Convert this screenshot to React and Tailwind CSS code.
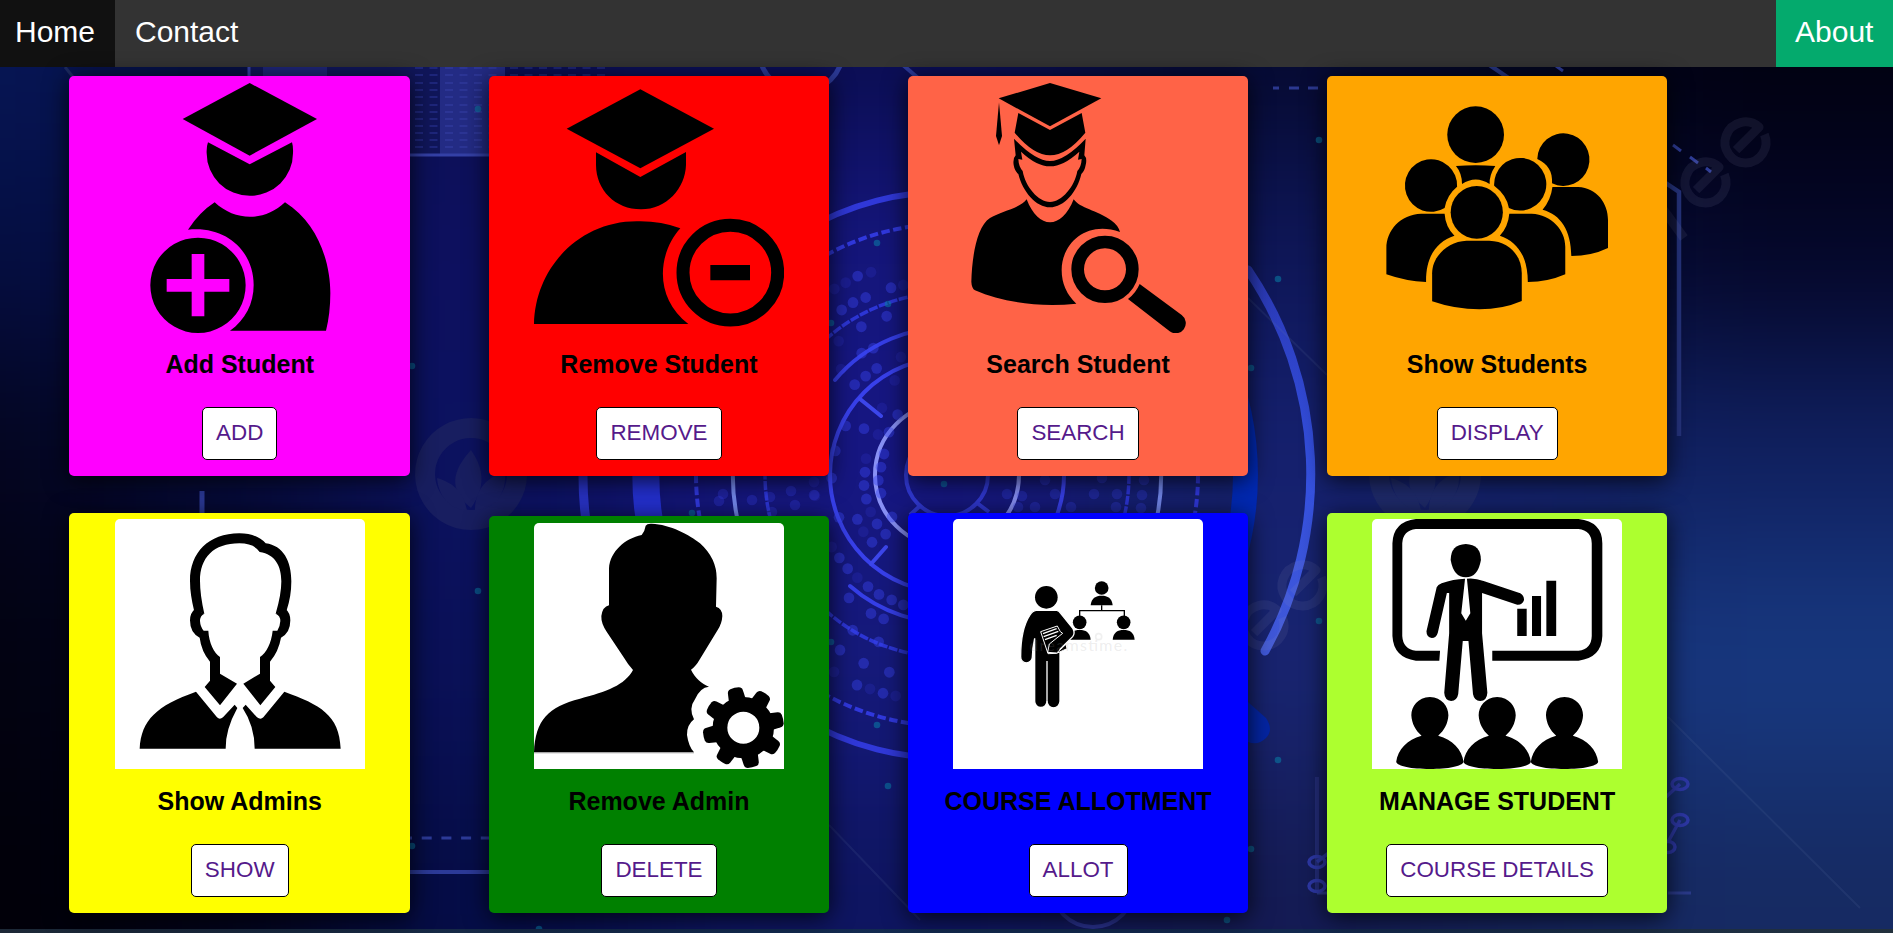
import React from "react";

/* ---------- page backdrop ---------- */

const meshX = [-200, 120, 340, 640, 1080, 1400, 1620, 2150];
const meshY = [-180, 150, 350, 550, 780, 1150];
const mesh = [
  ["#061656", "#050e42", "#04051f", "#02020f", "#010008"],
  ["#050f42", "#081048", "#060b3a", "#050830", "#02031a"],
  ["#0c1055", "#0d1060", "#0c1262", "#0a115a", "#050d48"],
  ["#0a0d50", "#15167c", "#161682", "#15197a", "#0e1560"],
  ["#050930", "#0e1658", "#15206e", "#182470", "#141a52"],
  ["#02041c", "#0a1248", "#131f68", "#162a74", "#15235c"],
  ["#010110", "#040628", "#102060", "#17387f", "#162a62"],
];

const dots = [
  [143, 247, 1], [167, 302, 1], [129, 315, 1], [95, 334, 1], [243, 277, 1], [230, 350, 1], [154, 377, 1],
  [155, 445, 1], [190, 432, 1], [200, 484, 1], [167, 504, 1], [134, 526, 1], [93, 486, 0], [107, 632, 1],
  [162, 639, 1], [216, 586, 0], [263, 603, 1], [204, 654, 0], [237, 648, 1], [222, 704, 1], [165, 751, 1],
  [168, 716, 0], [213, 738, 1], [162, 785, 1], [205, 772, 1], [169, 820, 1], [213, 805, 1], [142, 872, 1],
  [182, 853, 0], [201, 884, 1], [246, 866, 1], [160, 904, 0], [227, 910, 1], [186, 931, 1], [87, 867, 1],
  [65, 766, 1], [88, 971, 1], [113, 999, 1], [142, 1022, 0], [174, 1045, 1], [207, 1065, 1], [245, 1079, 1],
  [117, 1074, 1], [280, 1092, 1], [183, 1114, 1], [221, 1128, 1], [128, 1157, 1], [206, 1187, 1], [90, 1208, 1],
  [161, 1242, 1], [238, 1265, 1], [141, 1298, 1], [180, 1308, 0], [219, 1319, 1], [257, 1326, 0], [73, 280, 0],
  [107, 264, 0], [183, 237, 0], [280, 270, 0], [76, 696, 1], [86, 414, 0], [273, 455, 0], [254, 515, 0],
  [72, 1264, 0], [65, 943, 0], [15, 811, 0], [12, 776, 0],
];

const gapDots = [
  [723, 494], [719, 501], [752, 500], [791, 491], [795, 505], [814, 495], [770, 497], [772, 512],
  [1007, 494], [1022, 496], [1055, 494], [1094, 494], [1117, 494], [1142, 495], [1018, 507], [1035, 507],
  [1071, 507], [1116, 507], [1141, 508], [1102, 478], [1144, 480], [1045, 480],
];

const sparks = [
  [877, 243], [888, 304], [831, 323], [831, 642], [877, 725], [888, 786], [1319, 140], [1278, 279], [1251, 368],
  [1319, 621], [1278, 760], [1251, 849], [478, 109], [478, 591], [412, 846], [412, 366], [692, 513], [944, 484],
  [1227, 920], [539, 929],
];

function WatermarkE({ x, y }) {
  return (
    <g transform={`translate(${x} ${y}) rotate(-45)`} fill="none" stroke="#9aa0c0" strokeOpacity="0.1" strokeWidth="9">
      <path d="M19 7 A20.5 20.5 0 1 1 20.5 -2 L-12 -2" strokeLinejoin="round" />
    </g>
  );
}

function WatermarkLeaf({ x, fill }) {
  return (
    <g transform={`translate(${x} 474)`} fill="none" stroke={fill}>
      <path d="M0 -46 A46 46 0 1 0 0.1 -46 Z" strokeWidth="20" />
      <path d="M0 -24 C-24 2 -18 20 0 34 C14 14 14 -4 0 -24 Z" fill={fill} stroke="none" />
      <path d="M-34 4 C-32 26 -18 36 -4 36 C-8 16 -20 8 -34 4 Z M34 -2 C36 24 20 36 4 36 C4 14 18 2 34 -2 Z" fill={fill} stroke="none" />
    </g>
  );
}

function Backdrop() {
  return (
    <svg className="absolute inset-0 h-full w-full" viewBox="0 0 1893 933" preserveAspectRatio="none" aria-hidden="true">
      <defs>
        <filter id="soft" filterUnits="userSpaceOnUse" x="-200" y="-200" width="2350" height="1350" colorInterpolationFilters="sRGB">
          <feGaussianBlur stdDeviation="75" />
        </filter>
        <linearGradient id="seam" x1="0" x2="1" y1="0" y2="0">
          <stop offset="0" stopColor="#1c2836" />
          <stop offset="0.4" stopColor="#122a50" />
          <stop offset="0.7" stopColor="#12284e" />
          <stop offset="1" stopColor="#22303c" />
        </linearGradient>
        <linearGradient id="arc" x1="0" x2="0" y1="0" y2="1">
          <stop offset="0" stopColor="#2a38b4" />
          <stop offset="0.5" stopColor="#3450e0" />
          <stop offset="1" stopColor="#4058d8" />
        </linearGradient>
      </defs>
      <g filter="url(#soft)">
        {mesh.map((col, i) =>
          col.map((c, j) => (
            <rect key={`${i}-${j}`} x={meshX[i]} y={meshY[j]} width={meshX[i + 1] - meshX[i] + 1} height={meshY[j + 1] - meshY[j] + 1} fill={c} />
          ))
        )}
      </g>

      {/* data panel, top left */}
      <rect x="250" y="60" width="190" height="94" fill="#10165a" />
      <rect x="263" y="60" width="64" height="94" fill="#1e2678" />
      <rect x="440" y="60" width="65" height="94" fill="#232b84" />
      <g strokeWidth="1.5" strokeDasharray="8 6.5">
        {[68, 75, 83, 90, 97, 105, 112, 119, 126, 133, 140, 147].map((y) => (
          <g key={y}>
            <path d={`M415 ${y}H440`} stroke="#232c86" />
            <path d={`M445 ${y}H500`} stroke="#303a9a" />
          </g>
        ))}
      </g>
      <path d="M510 68H610M510 75H610" stroke="#232c80" strokeWidth="1.5" strokeDasharray="8 6.5" />
      <path d="M249 60V155H505" fill="none" stroke="#3440a6" strokeWidth="3" />
      <path d="M65 67L73 77" stroke="#1c2a60" strokeWidth="3" />

      {/* target rings */}
      <g fill="none">
        <path d="M1248 270A364 364 0 0 1 1265 651" stroke="url(#arc)" strokeWidth="9" strokeLinecap="round" />
        <path d="M600 365A364 364 0 0 0 600 585" stroke="#2832c4" strokeWidth="9" />
        <path d="M670 357A300 300 0 0 0 670 593" stroke="#2430d0" strokeWidth="27" />
        <path d="M800 717A283 283 0 0 0 960 758M800 233A283 283 0 0 1 960 192" stroke="#3038d8" strokeWidth="6" />
        <circle cx="947" cy="475" r="251" stroke="#3038dc" strokeWidth="4" strokeDasharray="8.5 3.5" />
        <path d="M746 401A214 214 0 0 0 746 549M1148 401A214 214 0 0 1 1148 549" stroke="#7488ec" strokeWidth="4" />
        <circle cx="947" cy="475" r="182" stroke="#2c35d4" strokeWidth="3.5" strokeDasharray="9 1.5" />
        <path d="M835 380A147 147 0 0 1 960 328M850 586A147 147 0 0 0 960 622" stroke="#353ee6" strokeWidth="4" strokeLinecap="round" />
        <circle cx="947" cy="475" r="117" stroke="#3840ea" strokeWidth="4" />
        <path d="M860 399L881 416M871 564L886 547" stroke="#3c46ea" strokeWidth="4" strokeLinecap="round" />
        <circle cx="947" cy="475" r="72" stroke="#8890f4" strokeWidth="4" />
        <circle cx="947" cy="475" r="41" stroke="#3038d0" strokeWidth="4" />
        <path d="M921 505L910 515M977 503L989 512" stroke="#3038d0" strokeWidth="4" />
      </g>
      <path d="M1233 475A286 286 0 0 0 1205 352L1232 350A314 314 0 0 1 1232 600L1205 598A286 286 0 0 0 1233 475Z" fill="#0029b4" />
      <path d="M1235 690L1248 702L1266 718Q1274 730 1266 738Q1258 746 1248 742L1235 742Z" fill="#0425a4" />
      <g transform="translate(810 180) scale(0.33333 0.38911)">
        {dots.map(([x, y, on]) => (
          <ellipse key={`${x}-${y}`} cx={x} cy={y} rx="16" ry="14" fill="#3a44f0" fillOpacity={on ? 0.42 : 0.17} />
        ))}
      </g>
      {gapDots.map(([x, y]) => (
        <circle key={`${x}-${y}`} cx={x} cy={y} r="5.3" fill="#3a44f0" fillOpacity="0.28" />
      ))}
      {sparks.map(([x, y]) => (
        <circle key={`${x}-${y}`} cx={x} cy={y} r="3.3" fill="#0a7fa8" fillOpacity="0.55" />
      ))}

      {/* connecting lines */}
      <g fill="none" stroke="#2c3a98">
        <circle cx="801" cy="50" r="42" strokeWidth="5" />
        <circle cx="1093" cy="885" r="42" strokeWidth="4" stroke="#28308a" />
        <path d="M903 65L918 78" strokeWidth="4" />
        <path d="M1488 64L1510 79L1679 192V436" strokeWidth="4.5" stroke="#263580" />
        <path d="M1556 66L1563 71M1673 145L1681 151M1690 157L1698 163M1706 168L1711 172" strokeWidth="3" stroke="#2e3c96" />
        <path d="M1273 88H1279M1289 88H1299M1308 88H1318" strokeWidth="3" stroke="#2c3890" />
        <path d="M202 491V515" strokeWidth="5" />
        <path d="M402 838H489" strokeWidth="3" strokeDasharray="10 9.7" />
        <path d="M402 872H489" strokeWidth="4" />
        <path d="M1317 777V893" strokeWidth="4" stroke="#232c78" />
        <path d="M1668 893H1691M1317 893H1330" strokeWidth="3" stroke="#2a3a8a" />
        <path d="M1666 797L1680 784M1668 842L1680 820M1317 862L1330 852" strokeWidth="3.5" stroke="#2c38a0" />
        <g strokeWidth="3.5" stroke="#2d38a6">
          <ellipse cx="1317" cy="862" rx="8" ry="5.5" />
          <ellipse cx="1317" cy="886" rx="8" ry="5.5" />
          <ellipse cx="1680" cy="784" rx="8" ry="5.5" />
          <ellipse cx="1680" cy="820" rx="8" ry="5.5" />
          <ellipse cx="1668" cy="847" rx="7" ry="5.5" />
        </g>
        <path d="M1668 717L1860 908M829 825L920 920M1248 298L1327 375" strokeWidth="2" stroke="#6070a0" strokeOpacity="0.15" />
        <path d="M1660 205L1684 238" stroke="#9aa0c0" strokeOpacity="0.1" strokeWidth="9" />
      </g>

      <WatermarkLeaf x={471} fill="#181e60" />
      <WatermarkLeaf x={1425} fill="#1f2b6c" />
      <WatermarkE x={1746} y={143} />
      <WatermarkE x={1706} y={183} />
      <WatermarkE x={1303} y={586} />
      <WatermarkE x={1264} y={626} />

      <rect x="0" y="929" width="1893" height="4" fill="url(#seam)" />
    </svg>
  );
}

/* ---------- card pictures ---------- */

const pic = "block h-[250px] w-[250px] shrink-0";

function AddStudentPic() {
  return (
    <svg className={pic} viewBox="344 249 750 750">
      <path d="M748 249L950 357L748 467L547 357Z" />
      <path d="M623 427L748 493L875 427Q879 440 878 460A129 127 0 0 1 619 460Q618 440 623 427Z" />
      <path d="M643 607C705 665 793 665 854 607C955 670 990 790 990 880Q990 940 977 992H689C735 960 760 910 760 855C760 755 680 677 563 689Q598 636 643 607Z" />
      <path fillRule="evenodd" d="M593 713A143 143 0 1 1 592.900 713ZM574 762V837H499V875H574V949H612V875H687V837H612V762Z" />
    </svg>
  );
}

function RemoveStudentPic() {
  return (
    <svg className={pic} viewBox="192 69 750 750">
      <path d="M511 88L732 206L511 325L290 206Z" />
      <path d="M378 277L511 351L648 276V315C646 385 590 448 513 448C436 448 378 390 378 315Z" />
      <path d="M192 792C196 620 330 484 500 484Q570 482 631 505C560 585 555 715 655 792Z" />
      <circle cx="781" cy="638" r="142" fill="none" stroke="#000" strokeWidth="39" />
      <path d="M721 615H840V661H721Z" />
    </svg>
  );
}

function SearchStudentPic() {
  return (
    <svg className={pic} viewBox="219 69 750 750">
      <path d="M510 69L664 115L510 199L356 115Z" />
      <path d="M357 127L366 228L357 256L348 228Z" />
      <path d="M415 159L510 210L605 159L616 218Q560 286 510 286Q460 286 404 218Z" />
      <path
        fillRule="evenodd"
        d="M402 236Q465 302 510 303Q555 302 617 236L613 286Q622 295 617 315Q614 333 604 342C592 395 552 442 510 442C468 442 428 395 415 342Q404 333 401 315Q398 295 407 286ZM423 275L427 299L415 297Q416 320 428 333C436 380 475 426 510 426C545 426 584 380 592 333Q604 320 605 297L594 299L598 275Q550 319 510 319Q470 319 423 275Z"
      />
      <path d="M440 418C475 510 545 510 581 418C600 445 650 450 695 482Q715 496 720 516C620 480 545 550 545 630Q545 690 589 731C480 742 370 728 285 691Q275 685 274 665C276 590 290 500 330 474C360 455 420 445 440 418Z" />
      <circle cx="675" cy="628" r="82" fill="none" stroke="#000" strokeWidth="38" />
      <path d="M779 672L905 765A30 30 0 0 1 869 814L744 717Q767 700 779 672Z" />
    </svg>
  );
}

function ShowStudentsPic() {
  return (
    <svg className={pic} viewBox="190 69 661 750" preserveAspectRatio="none">
      <ellipse cx="464" cy="224" rx="75" ry="85" />
      <path d="M412 318Q464 313 516 318Q500 345 501 372Q464 345 428 372Q428 340 412 318Z" />
      <path d="M627 297A69 79 0 1 1 666 370C668 335 655 312 627 297Z" />
      <path d="M667 381H735C785 384 814 430 814 480V564Q770 588 717 588C716 510 690 465 641 449Q663 420 667 381Z" />
      <path d="M415 380A69 79 0 1 0 382 444Q388 405 415 380Z" />
      <path d="M513 377A69 79 0 1 1 552 444Q546 405 513 377Z" />
      <path d="M382 461H320C265 464 228 510 228 565V643Q280 664 333 666C332 590 360 545 408 527Q384 500 382 461Z" />
      <path d="M553 461H612C665 464 701 510 701 560V643Q655 666 602 666C602 590 575 545 528 527Q550 500 553 461Z" />
      <ellipse cx="467" cy="457" rx="69" ry="79" />
      <path d="M440 542H500C555 544 586 590 586 640V723Q535 748 474 748Q410 748 349 724V640C349 590 390 544 440 542Z" />
    </svg>
  );
}

function ShowAdminsPic() {
  return (
    <svg className={`${pic} rounded-t-[5px] bg-white`} viewBox="345 118 750 750">
      <path
        fillRule="evenodd"
        d="M582 392C575 360 570 335 570 303C570 220 625 161 718 161Q770 161 797 191C850 198 874 245 874 305Q874 350 860 392L827 402Q844 345 844 305C844 260 826 224 779 217Q762 191 718 191C640 191 600 235 600 303Q600 345 613 402Z"
      />
      <path d="M585 388L613 402Q600 408 600 424Q601 442 611 453H625C627 490 642 520 660 532V582L711 612L660 677L614 622L630 603V546Q604 515 599 474Q570 460 570 422Q570 400 585 388Z" />
      <path d="M857 388L827 402Q841 408 841 424Q840 442 832 453H818C814 490 799 520 780 532V582L730 612L781 677L826 622L810 603V546Q836 515 843 474Q871 460 871 422Q871 400 857 388Z" />
      <path d="M588 636L651 713Q659 721 669 713L704 675L712 685Q676 750 677 807H419C424 720 470 678 588 636Z" />
      <path d="M853 636L790 713Q782 721 771 713L737 675L728 685Q764 740 764 807H1022C1018 705 960 675 853 636Z" />
    </svg>
  );
}

function RemoveAdminPic() {
  return (
    <svg className="block h-[246px] w-[250px] shrink-0 rounded-t-[5px] bg-white" viewBox="192 99 750 738" preserveAspectRatio="none">
      <path d="M192 787C196 690 235 650 330 626C410 605 465 585 489 540Q475 525 460 500L410 425Q393 400 394 378Q398 350 417 346V235C420 185 465 145 515 135Q524 125 527 107Q531 100 545 101C600 103 660 135 690 160Q740 205 740 265L738 350Q757 356 757 378Q756 400 743 420L690 507Q677 530 663 539C675 565 695 580 717 590Q690 592 675 628Q655 655 672 688Q650 705 651 735Q656 770 672 787Z" />
      <path d="M192 788.500H672" stroke="#888" strokeWidth="2" />
      <circle cx="820" cy="713" r="70" fill="none" stroke="#000" strokeWidth="44" />
      {[-12.5, 32.5, 77.5, 122.5, 167.5, 212.5, 257.5, 302.5].map((a) => (
        <path key={a} d="M900 687L930 690Q939 691 941 700Q943 713 941 726Q939 735 930 736L900 739Z" transform={`rotate(${a} 820 713)`} />
      ))}
    </svg>
  );
}

function Bust({ x, y }) {
  return (
    <g transform={`translate(${x} ${y})`}>
      <circle r="20.500" />
      <path d="M-33 52C-31 30 -18 23 0 23C18 23 31 30 33 52Z" />
    </g>
  );
}

function CourseAllotmentPic() {
  return (
    <svg className={`${pic} rounded-t-[5px] bg-white`} viewBox="219 87 750 750">
      <Bust x="665" y="294" />
      <Bust x="599" y="397" />
      <Bust x="731" y="397" />
      <path d="M665 346V362M599 380V362H733V380" fill="none" stroke="#000" strokeWidth="4" />
      <circle cx="499" cy="322" r="34" />
      <path
        stroke="#fff"
        strokeWidth="4"
        d="M468 361H530Q537 362 542 370L579 416Q586 430 578 440L540 478V634A18 18 0 0 1 501 634A18 18 0 0 1 464 634V445Q457 475 457 502A17 17 0 0 1 422 500C422 450 430 405 450 375Q458 362 468 361Z"
      />
      <path d="M501 513V636" stroke="#fff" strokeWidth="4" />
      <path d="M482 425L532 408L541 425L548 430L508 462L503 487L530 489L558 463L561 476L530 490L504 491Z" stroke="#fff" strokeWidth="3" />
      <path d="M489 431L530 416M491 440L535 424M495 449L530 436" stroke="#fff" strokeWidth="4" />
      <text x="448" y="482" fontSize="48" fontFamily="Lato, sans-serif" textLength="294" fill="#999" fillOpacity="0.18">
        dreamstime.
      </text>
      <circle cx="656" cy="440" r="9" fill="none" stroke="#999" strokeOpacity="0.15" strokeWidth="5" />
    </svg>
  );
}

function ManageStudentPic() {
  return (
    <svg className={`${pic} rounded-t-[5px] bg-white`} viewBox="190 87 661 750" preserveAspectRatio="none">
      <path
        fillRule="evenodd"
        d="M306 87H736Q799 95 799 160V438Q797 503 736 512H508V482H736Q770 478 771 438V160Q770 121 736 117H306Q272 121 270 160V438Q272 478 306 482H370L368 512H306Q247 503 244 438V160Q246 95 306 87Z"
      />
      <path d="M438 162Q478 164 478 210Q470 262 438 262Q406 262 398 210Q398 164 438 162Z" />
      <path d="M436 266L426 370L438 392L450 370L441 266Q462 263 485 273L582 310Q592 316 592 330Q588 345 574 344L481 309V430L495 608Q494 632 476 633Q460 632 457 612L445 453H430L418 612Q415 632 399 633Q382 630 381 608L394 430V309H388L364 428Q360 444 348 444Q334 442 334 424L361 292Q364 284 374 280Q405 267 436 266Z" />
      <path d="M574 356H599V438H574ZM613 318H637V438H613ZM651 272H677V438H651Z" />
      {[343, 521, 699].map((x) => (
        <path
          key={x}
          transform={`translate(${x} 0)`}
          d="M0 621C32 622 49 650 49 676C48 700 38 722 22 737C60 748 85 780 89 815C88 828 50 837 0 837C-50 837 -88 828 -89 815C-85 780 -60 748 -22 737C-38 722 -48 700 -49 676C-49 650 -32 622 0 621Z"
        />
      ))}
    </svg>
  );
}

/* ---------- page ---------- */

const upper = { card: "h-[400px] pt-[7px]", heading: "mt-[17px]" };
const lower = { card: "h-[400px] pt-1.5", heading: "mt-[18px]" };
const short = { card: "h-[397px] pt-[7px]", heading: "mt-[18px]" };

const cards = [
  { title: "Add Student", action: "ADD", bg: "bg-[#ff00ff]", fit: upper, Pic: AddStudentPic },
  { title: "Remove Student", action: "REMOVE", bg: "bg-[#ff0000]", fit: upper, Pic: RemoveStudentPic },
  { title: "Search Student", action: "SEARCH", bg: "bg-[#ff6347]", fit: upper, Pic: SearchStudentPic },
  { title: "Show Students", action: "DISPLAY", bg: "bg-[#ffa500]", fit: upper, Pic: ShowStudentsPic },
  { title: "Show Admins", action: "SHOW", bg: "bg-[#ffff00]", fit: lower, Pic: ShowAdminsPic },
  { title: "Remove Admin", action: "DELETE", bg: "bg-[#008000]", fit: short, Pic: RemoveAdminPic },
  { title: "COURSE ALLOTMENT", action: "ALLOT", bg: "bg-[#0000ff]", fit: lower, Pic: CourseAllotmentPic },
  { title: "MANAGE STUDENT", action: "COURSE DETAILS", bg: "bg-[#adff2f]", fit: lower, Pic: ManageStudentPic },
];

function Card({ title, action, bg, fit, Pic }) {
  return (
    <section className={`flex flex-col items-center rounded-[5px] pb-4 shadow-[0_4px_24px_rgba(0,0,0,0.8)] ${bg} ${fit.card}`}>
      <Pic />
      <h2 className={`text-[25px] leading-7 font-bold whitespace-nowrap text-black ${fit.heading}`}>{title}</h2>
      <a href="#" className="mt-auto flex h-[53.500px] items-start rounded-[5px] border border-black bg-white px-[13px] pt-3 text-[22.400px] leading-[26px] text-[#551a8b]">
        {action}
      </a>
    </section>
  );
}

export default function App() {
  return (
    <div className="relative h-[933px] w-full overflow-hidden bg-[#0c1058] font-['Liberation_Sans',Arial,sans-serif]">
      <Backdrop />
      <nav className="relative flex h-[67px] bg-[#333333] text-[30px] leading-[34px] text-white">
        <a href="#" className="w-[115px] bg-[#111111] pt-[15px] pl-[15px]">Home</a>
        <a href="#" className="px-5 pt-[15px]">Contact</a>
        <a href="#" className="ml-auto w-[117px] bg-[#04aa6d] pt-[15px] pl-[19px]">About</a>
      </nav>
      <main className="relative grid grid-cols-[340.800px_340.400px_340.400px_340.400px] items-end gap-x-[78.700px] gap-y-[37px] pt-[9px] pl-[69.300px]">
        {cards.map((card) => (
          <Card key={card.title} {...card} />
        ))}
      </main>
    </div>
  );
}
